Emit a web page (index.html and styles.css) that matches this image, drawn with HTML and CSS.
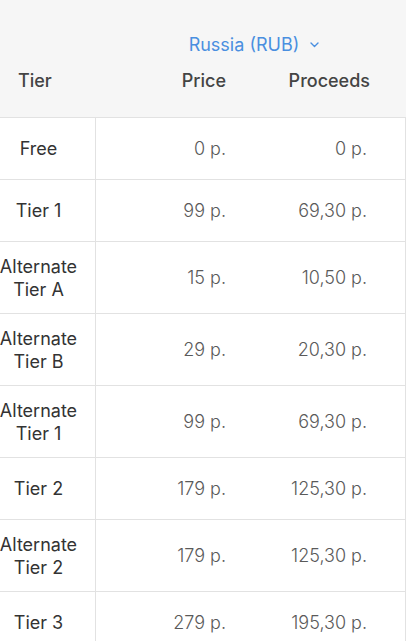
FILE: index.html
```html
<!DOCTYPE html>
<html>
<head>
<meta charset="utf-8">
<link rel="stylesheet" href="styles.css">
</head>
<body>
<div class="table">
  <div class="head">
    <div class="currency-row">
      <div class="spacer"></div>
      <div class="currency">Russia (RUB)
        <svg class="chev" width="9" height="6" viewBox="0 0 9 6"><path d="M1 1 L4.5 4.5 L8 1" fill="none" stroke="#4a8fe0" stroke-width="1.4" stroke-linecap="round" stroke-linejoin="round"/></svg>
      </div>
    </div>
    <div class="cols">
      <div class="h-tier">Tier</div>
      <div class="h-price">Price</div>
      <div class="h-proc">Proceeds</div>
    </div>
  </div>
  <div class="row"><div class="tier">Free</div><div class="price">0 p.</div><div class="proc">0 p.</div></div>
  <div class="row"><div class="tier">Tier 1</div><div class="price">99 p.</div><div class="proc">69,30 p.</div></div>
  <div class="row tall"><div class="tier">Alternate<br>Tier A</div><div class="price">15 p.</div><div class="proc">10,50 p.</div></div>
  <div class="row tall"><div class="tier">Alternate<br>Tier B</div><div class="price">29 p.</div><div class="proc">20,30 p.</div></div>
  <div class="row tall"><div class="tier">Alternate<br>Tier 1</div><div class="price">99 p.</div><div class="proc">69,30 p.</div></div>
  <div class="row"><div class="tier">Tier 2</div><div class="price">179 p.</div><div class="proc">125,30 p.</div></div>
  <div class="row tall"><div class="tier">Alternate<br>Tier 2</div><div class="price">179 p.</div><div class="proc">125,30 p.</div></div>
  <div class="row"><div class="tier">Tier 3</div><div class="price">279 p.</div><div class="proc">195,30 p.</div></div>
</div>
</body>
</html>
```
FILE: styles.css
```css
html, body {
  margin: 0;
  padding: 0;
  background: #ffffff;
  overflow: hidden;
}
body {
  font-family: Inter, "Noto Sans", sans-serif;
  font-size: 18px;
  color: #444;
}
.table {
  margin-left: -18px;
  width: 424px;
}
.head {
  height: 118px;
  background: #f6f6f6;
  border-bottom: 1px solid #e2e2e2;
  box-sizing: border-box;
  padding-top: 34px;
}
.currency-row {
  display: flex;
  line-height: 22px;
}
.spacer { width: 114px; }
.currency {
  width: 310px;
  text-align: center;
  color: #4a8fe0;
  font-weight: 400;
  padding-left: 6px;
  box-sizing: border-box;
}
.chev { margin-left: 6px; vertical-align: 3px; }
.cols {
  margin-top: 14px;
  line-height: 22px;
  display: grid;
  grid-template-columns: 114px 150px 160px;
  font-weight: 500;
  color: #444;
}
.h-tier { padding-left: 36px; }
.h-price { text-align: right; padding-right: 20px; }
.h-proc { text-align: right; padding-right: 36px; }
.row {
  display: grid;
  grid-template-columns: 114px 150px 160px;
  height: 62px;
  border-bottom: 1px solid #e2e2e2;
  box-sizing: border-box;
}
.row.tall { height: 72px; }
.row > div {
  display: flex;
  align-items: center;
  line-height: 23px;
}
.tier {
  justify-content: center;
  text-align: center;
  border-right: 1px solid #e2e2e2;
  font-weight: 400;
  color: #333;
}
.price {
  justify-content: flex-end;
  padding-right: 20px;
  color: #5a5a5a;
  font-weight: 300;
}
.proc {
  justify-content: flex-end;
  padding-right: 38px;
  color: #5a5a5a;
  font-weight: 300;
  border-right: 1px solid #e2e2e2;
}
```
